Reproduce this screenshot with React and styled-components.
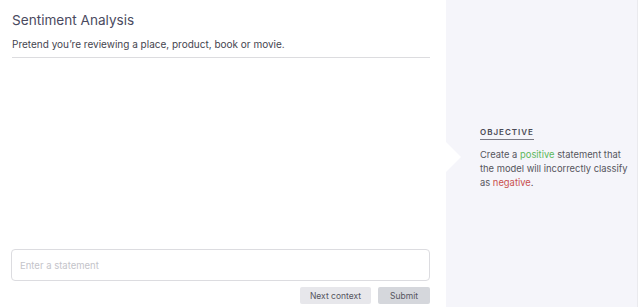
import React from "react";
import styled, { createGlobalStyle } from "styled-components";

const Global = createGlobalStyle`
  html, body { margin: 0; padding: 0; background: #fff; }
  body { font-family: Inter, "Noto Sans", sans-serif; }
  #root { width: 638px; height: 307px; }
`;

const Page = styled.div`
  display: flex;
  width: 638px;
  height: 307px;
  overflow: hidden;
`;

const Main = styled.div`
  width: 446px;
  flex: none;
  box-sizing: border-box;
  padding: 10px 16px 3px 12px;
  display: flex;
  flex-direction: column;
  background: #fff;
`;

const Title = styled.h1`
  margin: 0;
  font-size: 13.6px;
  font-weight: 400;
  line-height: 20px;
  color: #4a4a60;
`;

const Subtitle = styled.p`
  margin: 7px 0 0;
  font-size: 10px;
  line-height: 14px;
  color: #45454f;
`;

const Divider = styled.hr`
  margin: 6px 0 0;
  border: none;
  border-top: 1px solid #dcdcdf;
`;

const Spacer = styled.div`
  flex: 1;
`;

const Input = styled.input`
  box-sizing: border-box;
  width: 419px;
  margin-left: -1px;
  height: 32px;
  border: 1px solid #dcdce0;
  border-radius: 4px;
  padding: 0 8px;
  font-family: Inter, sans-serif;
  font-size: 9.5px;
  color: #333;
  outline: none;
  &::placeholder { color: #c4c4ca; }
`;

const Actions = styled.div`
  display: flex;
  justify-content: flex-end;
  gap: 7px;
  margin-top: 6px;
`;

const Button = styled.button`
  height: 17px;
  padding: 0;
  width: ${(p) => p.$w}px;
  border: none;
  border-radius: 2px;
  background: ${(p) => (p.$primary ? "#d5d7dc" : "#e7e7eb")};
  color: #55555f;
  font-family: Inter, sans-serif;
  font-size: 8.5px;
  cursor: pointer;
`;

const Side = styled.aside`
  flex: 1;
  position: relative;
  background: #f5f5fa;
  border-right: 1px solid #eaeaee;
  display: flex;
  align-items: center;
  padding-left: 34px;
  box-sizing: border-box;
`;

const Pointer = styled.div`
  position: absolute;
  left: 0;
  top: 142px;
  width: 0;
  height: 0;
  border-top: 15px solid transparent;
  border-bottom: 15px solid transparent;
  border-left: 15px solid #fff;
`;

const Objective = styled.div`
  width: 150px;
  margin-top: 2px;
`;

const Label = styled.div`
  display: inline-block;
  font-size: 8px;
  line-height: 10px;
  font-weight: 600;
  letter-spacing: 1px;
  color: #4a4a55;
  padding-bottom: 2px;
  border-bottom: 1px solid #7a7a85;
`;

const Body = styled.p`
  margin: 8px 0 0;
  font-size: 9.4px;
  line-height: 14px;
  color: #55555d;
`;

const Pos = styled.span`
  color: #5cb85c;
`;

const Neg = styled.span`
  color: #c9504e;
`;

export default function App() {
  return (
    <>
      <Global />
      <Page>
        <Main>
          <Title>Sentiment Analysis</Title>
          <Subtitle>Pretend you’re reviewing a place, product, book or movie.</Subtitle>
          <Divider />
          <Spacer />
          <Input placeholder="Enter a statement" />
          <Actions>
            <Button $w={71}>Next context</Button>
            <Button $w={52} $primary>Submit</Button>
          </Actions>
        </Main>
        <Side>
          <Pointer />
          <Objective>
            <Label>OBJECTIVE</Label>
            <Body>
              Create a <Pos>positive</Pos> statement that the model will incorrectly classify as{" "}
              <Neg>negative</Neg>.
            </Body>
          </Objective>
        </Side>
      </Page>
    </>
  );
}
